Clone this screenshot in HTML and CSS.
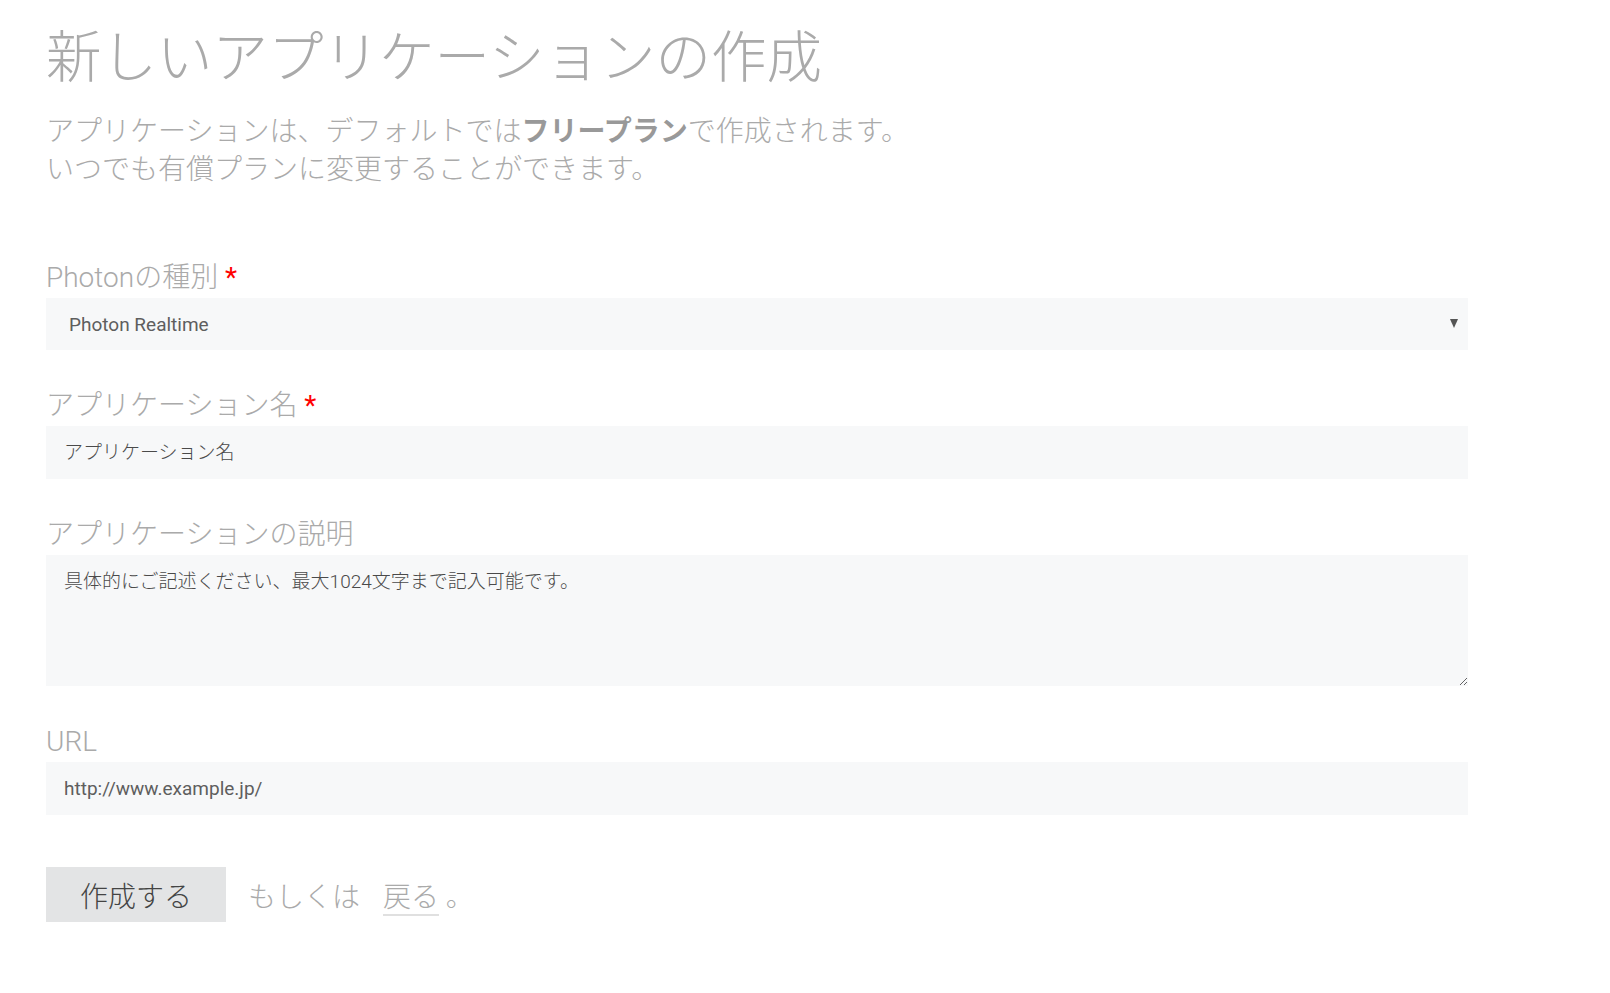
FILE: index.html
```html
<!DOCTYPE html>
<html lang="ja">
<head>
    <meta charset="UTF-8">
    <meta name="viewport" content="width=device-width, initial-scale=1.0">
    <title>新しいアプリケーションの作成</title>
    <link rel="stylesheet" href="styles.css">
</head>
<body>

    <div class="container">
        <h1>新しいアプリケーションの作成</h1>
        <p class="lead">アプリケーションは、デフォルトでは<strong>フリープラン</strong>で作成されます。<br>いつでも有償プランに変更することができます。</p>

        <form id="appForm">
            <div class="form-group">
                <label for="type">Photonの種別 <span class="required">*</span></label>
                <div class="select-wrap">
                    <select id="type">
                        <option>Photon Realtime</option>
                        <option>Photon Turnbased</option>
                        <option>Photon Chat</option>
                        <option>Photon Voice</option>
                    </select>
                </div>
            </div>
            <div class="form-group">
                <label for="name">アプリケーション名 <span class="required">*</span></label>
                <input type="text" id="name" class="ja" placeholder="アプリケーション名">
            </div>
            <div class="form-group">
                <label for="description">アプリケーションの説明</label>
                <textarea id="description" class="ja" rows="4" placeholder="具体的にご記述ください、最大1024文字まで記入可能です。"></textarea>
            </div>
            <div class="form-group">
                <label for="url">URL</label>
                <input type="text" id="url" placeholder="http://www.example.jp/">
            </div>
            <div class="form-actions">
                <button type="submit">作成する</button>
                <span class="or">もしくは</span>
                <span><a href="#" class="back">戻る</a> 。</span>
            </div>
        </form>
    </div>

</body>
</html>
```

FILE: styles.css
```css
body {
    margin: 0;
    font-family: Roboto, "Noto Sans CJK JP", sans-serif;
    background-color: #fff;
    color: #aaa;
}
.container {
    width: 1422px;
    margin-left: 46px;
    padding-top: 26px;
}
h1 {
    margin: 0;
    font-size: 55.5px;
    line-height: 66px;
    font-weight: 300;
    color: #aaa;
}
.lead {
    margin: 21px 0 0;
    font-size: 28px;
    line-height: 38px;
    font-weight: 300;
    color: #aaa;
}
.lead strong {
    font-weight: bold;
    color: #999;
}
#appForm {
    margin-top: 69px;
}
.form-group {
    margin-bottom: 36px;
}
.form-group label {
    display: block;
    font-size: 28px;
    line-height: 40px;
    font-weight: 300;
    color: #aaa;
}
.required {
    color: #f00;
    font-weight: 400;
}
.form-group input, .form-group textarea, .form-group select {
    display: block;
    box-sizing: border-box;
    width: 100%;
    margin: 0;
    padding: 15px 18px;
    font-family: Roboto, "Noto Sans CJK JP", sans-serif;
    font-size: 19px;
    line-height: 23px;
    color: #5e5e5e;
    background-color: #f7f8f9;
    border: none;
    border-radius: 0;
    outline: none;
}
.form-group input::placeholder, .form-group textarea::placeholder {
    color: #5e5e5e;
    opacity: 1;
}
.form-group .ja {
    font-weight: 300;
}
.form-group .ja::placeholder {
    color: #4a4a4a;
}
.form-group textarea {
    height: 131px;
    resize: both;
}
.select-wrap {
    position: relative;
}
.form-group select {
    height: 52px;
    padding: 14px 18px 14px 23px;
    appearance: none;
    -webkit-appearance: none;
    cursor: pointer;
}
.select-wrap::after {
    content: "";
    position: absolute;
    right: 10px;
    top: 21px;
    border-left: 4.5px solid transparent;
    border-right: 4.5px solid transparent;
    border-top: 9px solid #555;
    pointer-events: none;
}
.form-actions {
    display: flex;
    align-items: center;
    margin-top: 52px;
    font-size: 28px;
    font-weight: 300;
    color: #aaa;
}
.form-actions button {
    height: 55px;
    padding: 0 34px;
    font-family: Roboto, "Noto Sans CJK JP", sans-serif;
    font-size: 28px;
    font-weight: 300;
    color: #444;
    background-color: #e3e4e5;
    border: none;
    border-radius: 0;
    cursor: pointer;
}
.form-actions button:hover {
    background-color: #d6d7d8;
}
.or {
    margin: 0 23px 0 22px;
}
.back {
    color: #aaa;
    text-decoration: none;
    border-bottom: 2px solid #e0e0e0;
}
```
